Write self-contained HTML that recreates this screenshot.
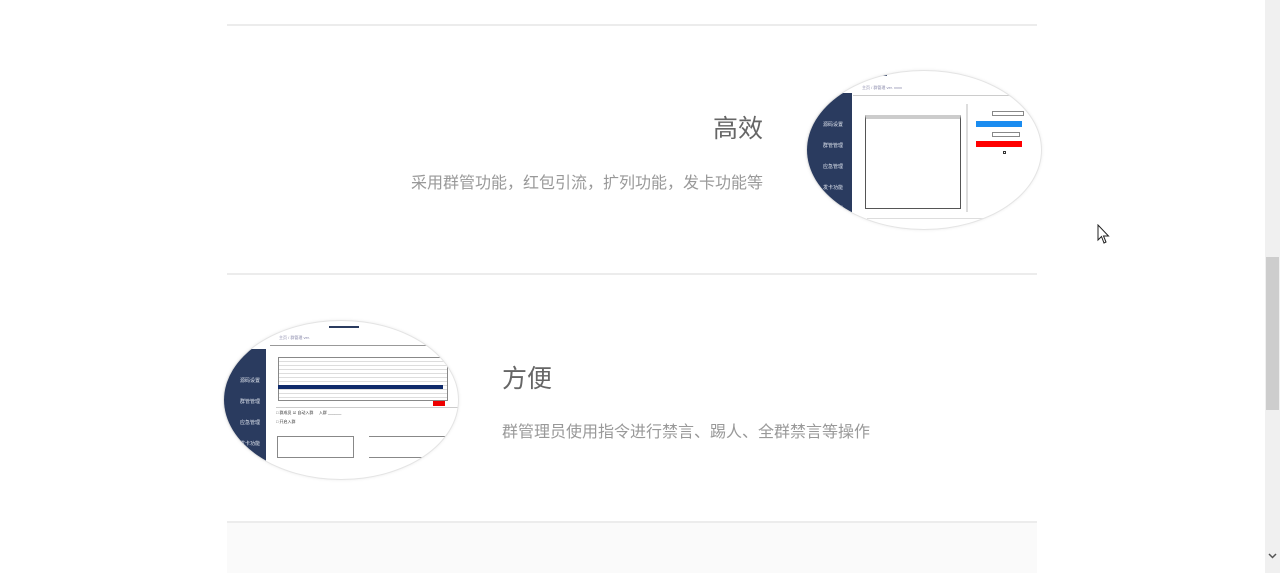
<!DOCTYPE html>
<html><head><meta charset="utf-8"><style>
*{margin:0;padding:0;box-sizing:border-box}
body{width:1280px;height:573px;overflow:hidden;background:#fff;font-family:"Liberation Sans","Noto Sans CJK SC",sans-serif;position:relative}
.line{position:absolute;left:227px;width:810px;height:2px;background:#ececec}
.t{position:absolute;color:#666;font-size:25px;line-height:30px}
.s{position:absolute;color:#999;font-size:16px;line-height:20px}
.ell{position:absolute;width:236px;height:160px;border-radius:50%;overflow:hidden;background:#fff;border:1px solid #e4e4e4;box-shadow:0 0 3px rgba(0,0,0,.08)}
.side{position:absolute;left:0;top:22px;width:45px;height:140px;background:#2a3b5f}
.side span{display:block;color:#dfe4ee;font-size:5px;margin:14px 0 0 16px}
.side span:first-child{margin-top:28px}
.sb{position:absolute;right:0;top:0;width:15px;height:573px;background:#f0f0f0}
.thumb{position:absolute;right:1px;top:257px;width:13px;height:153px;background:#cdcdcd}
</style></head><body>
<div class="line" style="top:24px"></div>
<div class="line" style="top:273px"></div>
<div class="line" style="top:521px"></div>
<div style="position:absolute;left:227px;top:523px;width:810px;height:50px;background:#fafafa"></div>

<div class="t" style="right:517px;top:114px">高效</div>
<div class="s" style="right:517px;top:174px">采用群管功能，红包引流，扩列功能，发卡功能等</div>

<div class="ell" style="left:806px;top:70px">
 <div style="position:absolute;left:50px;top:3px;width:30px;height:2px;background:#2a3b5f"></div>
 <div style="position:absolute;left:55px;top:14px;font-size:4px;color:#88a">主页 / 群管理 ver. xxxx</div>
 <div style="position:absolute;left:46px;top:24px;width:190px;height:1px;background:#ccc"></div>
 <div class="side"><span>源码设置</span><span>群管管理</span><span>应急管理</span><span>发卡功能</span><span>功能设置</span></div>
 <div style="position:absolute;left:58px;top:44px;width:96px;height:94px;border:1px solid #555;border-top:4px solid #ccc"></div>
 <div style="position:absolute;left:159px;top:33px;width:2px;height:108px;background:#ddd"></div>
 <div style="position:absolute;left:185px;top:40px;width:32px;height:5px;border:1px solid #888"></div>
 <div style="position:absolute;left:169px;top:50px;width:46px;height:6px;background:#1a8cf0"></div>
 <div style="position:absolute;left:185px;top:61px;width:28px;height:5px;border:1px solid #888"></div>
 <div style="position:absolute;left:169px;top:70px;width:46px;height:6px;background:#f00"></div>
 <div style="position:absolute;left:196px;top:80px;width:3px;height:3px;border:1px solid #333"></div>
 <div style="position:absolute;left:60px;top:147px;width:150px;height:1px;background:#ddd"></div>
</div>

<div class="ell" style="left:223px;top:320px">
 <div style="position:absolute;left:105px;top:5px;width:30px;height:2px;background:#2a3b5f"></div>
 <div style="position:absolute;left:55px;top:14px;font-size:4px;color:#88a">主页 / 群管理 ver.</div>
 <div style="position:absolute;left:46px;top:24px;width:190px;height:1px;background:#999"></div>
 <div class="side" style="top:28px;width:42px"><span>源码设置</span><span>群管管理</span><span>应急管理</span><span>发卡功能</span><span>功能设置</span></div>
 <div style="position:absolute;left:54px;top:36px;width:170px;height:44px;border:1px solid #888;background:repeating-linear-gradient(#fff 0 3px,#ddd 3px 4px)"></div>
 <div style="position:absolute;left:54px;top:64px;width:165px;height:4px;background:#0f2a6a"></div>
 <div style="position:absolute;left:209px;top:80px;width:12px;height:5px;background:#e00"></div>
 <div style="position:absolute;left:52px;top:86px;width:182px;height:1px;background:#ccc"></div>
 <div style="position:absolute;left:52px;top:89px;font-size:4px;color:#333;white-space:nowrap">□ 群成员 ☑ 自动入群 &nbsp;&nbsp;&nbsp; 入群 ______</div>
 <div style="position:absolute;left:52px;top:98px;font-size:4px;color:#333">□ 开启入群</div>
 <div style="position:absolute;left:53px;top:115px;width:77px;height:22px;border:1px solid #888"></div>
 <div style="position:absolute;left:145px;top:115px;width:80px;height:1px;background:#888"></div>
 <div style="position:absolute;left:145px;top:136px;width:70px;height:1px;background:#888"></div>
</div>

<div class="t" style="left:502px;top:364px">方便</div>
<div class="s" style="left:502px;top:423px">群管理员使用指令进行禁言、踢人、全群禁言等操作</div>

<svg style="position:absolute;left:1097px;top:224px" width="14" height="22" viewBox="0 0 14 22"><path d="M1 1 L1 16 L4.5 12.5 L7 19 L9 18 L6.5 12 L11.5 12 Z" fill="#fff" stroke="#222" stroke-width="1"/></svg>

<div class="sb"><div class="thumb"></div>
<svg style="position:absolute;left:3px;top:553px" width="9" height="6" viewBox="0 0 9 6"><path d="M1 1 L4.5 4.5 L8 1" fill="none" stroke="#555" stroke-width="1.5"/></svg></div>
</body></html>
